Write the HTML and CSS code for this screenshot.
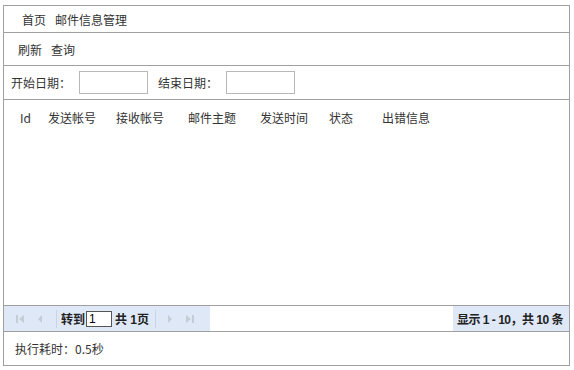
FILE: index.html
```html
<!DOCTYPE html>
<html lang="zh-CN">
<head>
    <meta charset="UTF-8">
    <title>邮件信息管理</title>
    <link rel="stylesheet" href="styles.css">
</head>
<body>
    <div class="panel">
        <div class="crumb">
            <span>首页</span>
            <span>邮件信息管理</span>
        </div>
        <div class="toolbar">
            <a>刷新</a>
            <a>查询</a>
        </div>
        <div class="search">
            <label>开始日期：</label>
            <input type="text" class="date">
            <label>结束日期：</label>
            <input type="text" class="date">
        </div>
        <div class="grid">
            <div class="grid-head">
                <span class="c-id">Id</span>
                <span class="c-from">发送帐号</span>
                <span class="c-to">接收帐号</span>
                <span class="c-subj">邮件主题</span>
                <span class="c-time">发送时间</span>
                <span class="c-state">状态</span>
                <span class="c-err">出错信息</span>
            </div>
        </div>
        <div class="pager">
            <div class="pager-left">
                <span class="pbtn">
                    <svg width="10" height="10" viewBox="0 0 10 10"><rect x="1" y="1" width="2" height="8" fill="#c4ccd6"/><path d="M9 1 L4 5 L9 9 Z" fill="#c4ccd6"/></svg>
                </span>
                <span class="pbtn">
                    <svg width="10" height="10" viewBox="0 0 10 10"><path d="M7 1 L3 5 L7 9 Z" fill="#c4ccd6"/></svg>
                </span>
                <span class="sep"></span>
                <span class="goto">转到<input type="text" class="page-no" value="1">共 1页</span>
                <span class="sep"></span>
                <span class="pbtn">
                    <svg width="10" height="10" viewBox="0 0 10 10"><path d="M3 1 L7 5 L3 9 Z" fill="#c4ccd6"/></svg>
                </span>
                <span class="pbtn">
                    <svg width="10" height="10" viewBox="0 0 10 10"><path d="M1 1 L6 5 L1 9 Z" fill="#c4ccd6"/><rect x="7" y="1" width="2" height="8" fill="#c4ccd6"/></svg>
                </span>
            </div>
            <div class="pager-info">显示 1 - 10，共 10 条</div>
        </div>
        <div class="footer">执行耗时：0.5秒</div>
    </div>
</body>
</html>
```

FILE: styles.css
```css
body {
    margin: 0;
    font-family: "Noto Sans CJK SC", "Liberation Sans", sans-serif;
    font-size: 12px;
    color: #333;
    background: #fff;
}
.panel {
    margin: 5px 0 0 3px;
    width: 565px;
    border: 1px solid #a0a0a0;
}
.crumb {
    height: 26px;
    display: flex;
    align-items: center;
    gap: 9px;
    padding-left: 18px;
    border-bottom: 1px solid #a0a0a0;
}
.toolbar {
    height: 32px;
    display: flex;
    align-items: center;
    gap: 9px;
    padding-left: 14px;
    border-bottom: 1px solid #a0a0a0;
}
.search {
    height: 33px;
    display: flex;
    align-items: center;
    padding-left: 7px;
    border-bottom: 1px solid #a0a0a0;
}
.date {
    box-sizing: border-box;
    width: 69px;
    height: 23px;
    margin: 0 10px 0 8px;
    border: 1px solid #b8b8b8;
    padding: 0;
}
.grid {
    height: 205px;
    border-bottom: 1px solid #a0a0a0;
}
.grid-head {
    display: flex;
    height: 34px;
    align-items: center;
    padding-left: 16px;
}
.c-id { width: 28px; }
.c-from { width: 68px; }
.c-to { width: 72px; }
.c-subj { width: 72px; }
.c-time { width: 69px; }
.c-state { width: 53px; }
.pager {
    height: 25px;
    display: flex;
    justify-content: space-between;
    border-bottom: 1px solid #a0a0a0;
    font-family: "Liberation Sans", "Noto Sans CJK SC", sans-serif;
}
.pager-left {
    display: flex;
    align-items: center;
    background: #dfe8f6;
    padding: 0 8px 0 6px;
    width: 192px;
}
.pbtn {
    width: 20px;
    display: flex;
    justify-content: center;
    align-items: center;
}
.sep {
    width: 1px;
    height: 18px;
    background: #c9d4e3;
    margin: 0 4px 0 6px;
}
.goto {
    display: flex;
    align-items: center;
    color: #222;
    font-weight: bold;
    white-space: nowrap;
}
.page-no {
    box-sizing: border-box;
    width: 26px;
    height: 16px;
    margin: 0 3px 0 1px;
    padding: 0 2px;
    border: 1px solid #555;
    font: 12px "Liberation Sans", sans-serif;
    color: #000;
}
.pager-info {
    display: flex;
    align-items: center;
    background: #dfe8f6;
    padding: 0 6px 0 4px;
    color: #222;
    font-weight: bold;
    letter-spacing: -0.5px;
}
.footer {
    height: 33px;
    display: flex;
    align-items: center;
    padding-left: 11px;
}
```
